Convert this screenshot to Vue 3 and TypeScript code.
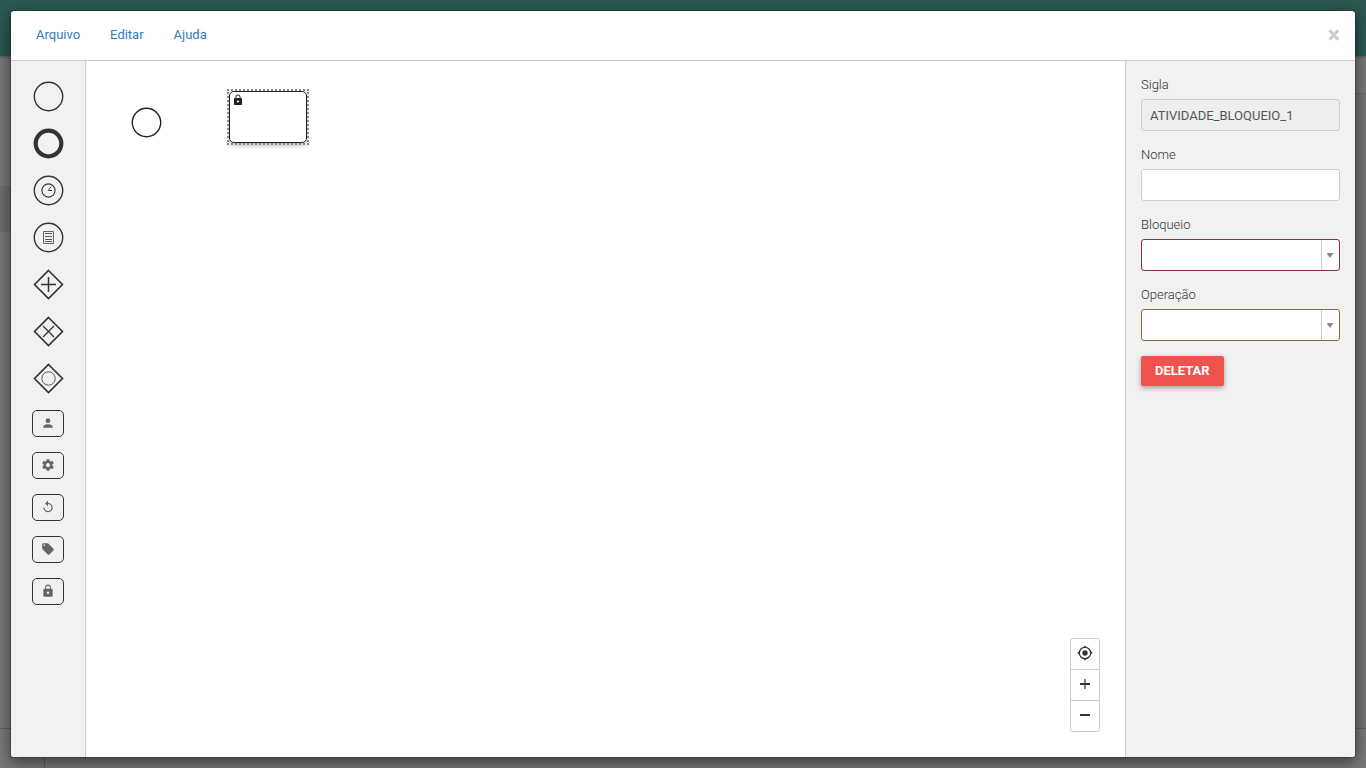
<script setup lang="ts">
import { ref } from 'vue'

interface PaletteItem {
  id: string
  label: string
  kind: 'event' | 'gateway' | 'task'
}

const menus: string[] = ['Arquivo', 'Editar', 'Ajuda']

const palette: PaletteItem[] = [
  { id: 'start', label: 'Início', kind: 'event' },
  { id: 'end', label: 'Fim', kind: 'event' },
  { id: 'timer', label: 'Temporizador', kind: 'event' },
  { id: 'condition', label: 'Condicional', kind: 'event' },
  { id: 'parallel', label: 'Paralelo', kind: 'gateway' },
  { id: 'exclusive', label: 'Exclusivo', kind: 'gateway' },
  { id: 'inclusive', label: 'Inclusivo', kind: 'gateway' },
  { id: 'user', label: 'Atividade de usuário', kind: 'task' },
  { id: 'service', label: 'Atividade de serviço', kind: 'task' },
  { id: 'loop', label: 'Atividade de retorno', kind: 'task' },
  { id: 'tag', label: 'Atividade de etiqueta', kind: 'task' },
  { id: 'lock', label: 'Atividade de bloqueio', kind: 'task' },
]

const taskIcons: Record<string, string> = {
  user: 'M12 12c2.21 0 4-1.79 4-4s-1.79-4-4-4-4 1.79-4 4 1.79 4 4 4zm0 2c-2.67 0-8 1.34-8 4v2h16v-2c0-2.66-5.33-4-8-4z',
  service:
    'M19.43 12.98c.04-.32.07-.64.07-.98s-.03-.66-.07-.98l2.11-1.65c.19-.15.24-.42.12-.64l-2-3.46c-.12-.22-.39-.3-.61-.22l-2.49 1c-.52-.4-1.08-.73-1.69-.98l-.38-2.65C14.46 2.18 14.25 2 14 2h-4c-.25 0-.46.18-.49.42l-.38 2.65c-.61.25-1.17.59-1.69.98l-2.49-1c-.23-.09-.49 0-.61.22l-2 3.46c-.13.22-.07.49.12.64l2.11 1.65c-.04.32-.07.65-.07.98s.03.66.07.98l-2.11 1.65c-.19.15-.24.42-.12.64l2 3.46c.12.22.39.3.61.22l2.49-1c.52.4 1.08.73 1.69.98l.38 2.65c.03.24.24.42.49.42h4c.25 0 .46-.18.49-.42l.38-2.65c.61-.25 1.17-.59 1.69-.98l2.49 1c.23.09.49 0 .61-.22l2-3.46c.12-.22.07-.49-.12-.64l-2.11-1.65zM12 15.5c-1.93 0-3.5-1.57-3.5-3.5s1.57-3.5 3.5-3.5 3.5 1.57 3.5 3.5-1.57 3.5-3.5 3.5z',
  loop: 'M12 5V1L7 6l5 5V7c3.31 0 6 2.69 6 6s-2.69 6-6 6-6-2.69-6-6H4c0 4.42 3.58 8 8 8s8-3.58 8-8-3.58-8-8-8z',
  tag: 'M21.41 11.58l-9-9C12.05 2.22 11.55 2 11 2H4c-1.1 0-2 .9-2 2v7c0 .55.22 1.05.59 1.42l9 9c.36.36.86.58 1.41.58.55 0 1.05-.22 1.41-.59l7-7c.37-.36.59-.86.59-1.41 0-.55-.23-1.06-.59-1.42zM5.5 7C4.67 7 4 6.33 4 5.5S4.67 4 5.5 4 7 4.67 7 5.5 6.33 7 5.5 7z',
  lock: 'M18 8h-1V6c0-2.76-2.24-5-5-5S7 3.24 7 6v2H6c-1.1 0-2 .9-2 2v10c0 1.1.9 2 2 2h12c1.1 0 2-.9 2-2V10c0-1.1-.9-2-2-2zm-6 9c-1.1 0-2-.9-2-2s.9-2 2-2 2 .9 2 2-.9 2-2 2zM8.9 8V6c0-1.71 1.39-3.1 3.1-3.1s3.1 1.39 3.1 3.1v2H8.9z',
}

const sigla = ref('ATIVIDADE_BLOQUEIO_1')
const nome = ref('')
const bloqueio = ref('')
const operacao = ref('')
</script>

<template>
  <div class="page">
    <div class="page-header"></div>
    <div class="page-body">
      <div class="page-nav"><span class="page-nav-active"></span></div>
      <div class="page-content"></div>
    </div>
    <div class="page-footer"><span class="page-footer-nav"></span></div>

    <div class="modal" role="dialog" aria-label="Editor de fluxo">
      <header class="bar">
        <nav class="menu">
          <a v-for="item in menus" :key="item" href="#">{{ item }}</a>
        </nav>
        <button class="close" type="button" aria-label="Fechar">×</button>
      </header>

      <div class="workspace">
        <aside class="palette">
          <button
            v-for="item in palette"
            :key="item.id"
            type="button"
            :class="item.kind"
            :aria-label="item.label"
          >
            <svg v-if="item.kind === 'event'" class="shape" viewBox="0 0 32 32">
              <circle v-if="item.id === 'end'" cx="16.5" cy="15.5" r="12.8" stroke-width="4.2" />
              <circle v-else cx="16.5" cy="15.5" r="14.2" stroke-width="1.4" />
              <g v-if="item.id === 'timer'" stroke-width="1.1">
                <circle cx="16.5" cy="15.5" r="6.6" />
                <path d="M19 11.5L16.3 15.5h3.7" stroke-width="0.9" />
              </g>
              <g v-if="item.id === 'condition'" stroke-width="1">
                <path d="M11.5 9.500h10v12h-10z" stroke="#666" />
                <path d="M13 11.5h7M13 14.5h7M13 17.5h7M13 19.5h7" stroke-width="0.8" />
              </g>
            </svg>
            <svg v-else-if="item.kind === 'gateway'" class="shape" viewBox="0 0 32 32">
              <path d="M16.5 1.5l14 14-14 14-14-14z" stroke-width="1.6" />
              <path v-if="item.id === 'parallel'" d="M16.5 8v15M9 15.5h15" stroke-width="1.5" />
              <path v-if="item.id === 'exclusive'" d="M11 10l11 11M22 10L11 21" stroke-width="1.3" />
              <circle v-if="item.id === 'inclusive'" cx="16.5" cy="15.5" r="6.7" stroke-width="0.8" />
            </svg>
            <svg v-else class="glyph" viewBox="0 0 24 24"><path :d="taskIcons[item.id]" /></svg>
          </button>
        </aside>

        <main class="canvas">
          <svg class="node-start" viewBox="0 0 32 32">
            <circle cx="16.5" cy="16.5" r="14.2" />
          </svg>
          <div class="node-task">
            <svg viewBox="0 0 24 24"><path :d="taskIcons.lock" /></svg>
          </div>
          <div class="zoom">
            <button type="button" aria-label="Centralizar">
              <svg viewBox="0 0 16 16">
                <circle cx="8" cy="8" r="5.7" fill="none" stroke="#333" stroke-width="1.3" />
                <circle cx="8" cy="8" r="2.7" />
                <path d="M7.2.7h1.6v2H7.2zM7.2 13.3h1.6v2H7.2zM.7 7.2h2v1.6h-2zM13.3 7.2h2v1.6h-2z" />
              </svg>
            </button>
            <button type="button" aria-label="Aproximar">
              <svg viewBox="0 0 16 16">
                <path d="M3 7h10v2H3z" />
                <path d="M7.4 3h1.2v10H7.4z" />
              </svg>
            </button>
            <button type="button" aria-label="Afastar">
              <svg viewBox="0 0 16 16"><path d="M3 7h10v2H3z" /></svg>
            </button>
          </div>
        </main>

        <form class="props" @submit.prevent>
          <div class="field">
            <label for="sigla">Sigla</label>
            <input id="sigla" v-model="sigla" type="text" disabled />
          </div>
          <div class="field">
            <label for="nome">Nome</label>
            <input id="nome" v-model="nome" type="text" />
          </div>
          <div class="field">
            <label for="bloqueio">Bloqueio</label>
            <div class="select error">
              <select id="bloqueio" v-model="bloqueio"><option value=""></option></select>
              <span class="arrow"></span>
            </div>
          </div>
          <div class="field">
            <label for="operacao">Operação</label>
            <div class="select warning">
              <select id="operacao" v-model="operacao"><option value=""></option></select>
              <span class="arrow"></span>
            </div>
          </div>
          <button class="delete" type="button">DELETAR</button>
        </form>
      </div>
    </div>
  </div>
</template>

<style>
body {
  margin: 0;
  overflow: hidden;
}
</style>

<style scoped>
* {
  box-sizing: border-box;
}
.page {
  position: relative;
  display: flex;
  flex-direction: column;
  height: 100vh;
  background: #797979;
  font-family: Roboto, "Liberation Sans", sans-serif;
  font-size: 13px;
  line-height: 18px;
  color: #333;
}
button {
  padding: 0;
  border: 0;
  background: none;
  font: inherit;
  color: inherit;
  cursor: pointer;
}
.page-header {
  height: 56px;
  background: #2b5851;
  box-shadow: 0 1px 3px rgba(0, 0, 0, 0.3);
}
.page-body {
  flex: 1;
  display: flex;
  justify-content: space-between;
}
.page-nav {
  width: 44px;
  padding-top: 130px;
}
.page-nav-active {
  display: block;
  height: 46px;
  background: #6d6d6d;
}
.page-content {
  flex: 1;
  margin-top: 37px;
  border-top: 1px solid #666;
  background: #737373;
}
.page-footer {
  height: 40px;
  border-top: 1px solid #606060;
}
.page-footer-nav {
  display: block;
  width: 45px;
  height: 100%;
  border-right: 1px solid #606060;
}
.modal {
  position: absolute;
  inset: 10px;
  display: flex;
  flex-direction: column;
  border: 1px solid rgba(0, 0, 0, 0.2);
  border-radius: 4px;
  background: #fff;
  background-clip: padding-box;
  box-shadow: 0 5px 15px rgba(0, 0, 0, 0.5);
  overflow: hidden;
}
.bar {
  display: flex;
  align-items: center;
  justify-content: space-between;
  height: 50px;
  padding: 0 15px 0 25px;
  border-bottom: 1px solid #ccc;
}
.menu {
  display: flex;
  gap: 30px;
  padding-bottom: 2px;
}
.menu a {
  color: #337ab7;
  text-decoration: none;
}
.close {
  font-size: 23px;
  line-height: 24px;
  font-weight: 700;
  color: #ccc;
}
.workspace {
  flex: 1;
  display: flex;
  min-height: 0;
}
.palette {
  display: flex;
  flex-direction: column;
  align-items: center;
  gap: 15px;
  width: 75px;
  padding-top: 20px;
  border-right: 1px solid #ccc;
  background: #f1f1f1;
}
.event,
.gateway {
  width: 32px;
  height: 32px;
}
.shape {
  display: block;
  width: 32px;
  height: 32px;
  fill: none;
  stroke: #333;
}
.task {
  display: flex;
  align-items: center;
  justify-content: center;
  width: 32px;
  height: 27px;
  padding-bottom: 1px;
  border: 1px solid #333;
  border-radius: 5px;
}
.glyph {
  width: 14px;
  height: 14px;
  fill: #666;
}
.canvas {
  position: relative;
  flex: 1;
}
.node-start {
  position: absolute;
  left: 44px;
  top: 45px;
  width: 32px;
  height: 32px;
  fill: #fff;
  stroke: #222;
  stroke-width: 1.4;
}
.node-task {
  position: absolute;
  left: 143px;
  top: 30px;
  width: 78px;
  height: 52px;
  border: 1px solid #222;
  border-radius: 5px;
  background: #fff;
  box-shadow: 0 3px 5px rgba(0, 0, 0, 0.25);
}
.node-task::before {
  content: "";
  position: absolute;
  inset: -3px;
  border: 2px dotted #888;
}
.node-task svg {
  display: block;
  width: 12px;
  height: 12px;
  margin: 2px;
  fill: #222;
}
.zoom {
  position: absolute;
  right: 25px;
  bottom: 25px;
  width: 30px;
  border: 1px solid #ccc;
  border-radius: 3px;
  background: #fff;
}
.zoom button {
  display: flex;
  align-items: center;
  justify-content: center;
  width: 100%;
  height: 30px;
  padding-bottom: 2px;
}
.zoom button + button {
  height: 31px;
  border-top: 1px solid #ccc;
}
.zoom svg {
  width: 16px;
  height: 16px;
  fill: #333;
}
.props {
  width: 230px;
  padding: 15px;
  border-left: 1px solid #ccc;
  background: #f1f1f1;
}
.field {
  margin-bottom: 15px;
}
.field label {
  display: block;
  margin-bottom: 5px;
  font-weight: 300;
}
.field input,
.field select {
  display: block;
  width: 100%;
  height: 32px;
  padding: 0 8px;
  border: 1px solid #ccc;
  border-radius: 3px;
  background: #fff;
  font: inherit;
  color: #555;
}
.field input:disabled {
  background: #eee;
}
.select {
  position: relative;
}
.field select {
  appearance: none;
}
.error select {
  border-color: #843534;
}
.warning select {
  border-color: #8a6d3b;
}
.arrow {
  position: absolute;
  top: 1px;
  right: 1px;
  bottom: 1px;
  display: flex;
  align-items: center;
  justify-content: center;
  width: 18px;
  padding: 1px 1px 0 0;
  border-left: 1px solid #ccc;
  pointer-events: none;
}
.arrow::before {
  content: "";
  width: 7px;
  height: 5px;
  background: #888;
  clip-path: polygon(0 0, 100% 0, 50% 100%);
}
.delete {
  display: block;
  height: 30px;
  padding: 0 14px;
  border-radius: 2px;
  background: #ef5350;
  box-shadow: 0 2px 5px rgba(0, 0, 0, 0.35);
  font-weight: 700;
  color: #fff;
}
</style>
